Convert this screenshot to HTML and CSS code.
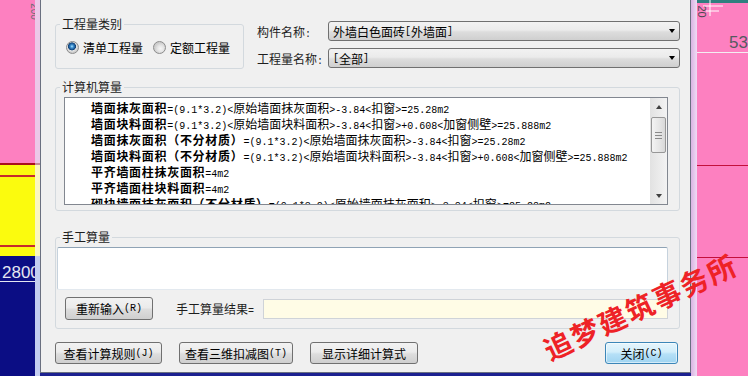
FILE: index.html
```html
<!DOCTYPE html>
<html lang="zh-CN">
<head>
    <meta charset="UTF-8">
    <title>查看工程量计算式</title>
    <link rel="stylesheet" href="styles.css">
</head>
<body>
    <div class="cad-left">
        <div class="pink-top"><span class="dim-200">200</span></div>
        <div class="red-bar"></div>
        <div class="yellow">
            <div class="thin-red"></div>
            <div class="thin-red"></div>
        </div>
        <div class="navy"><span class="dim-2800">2800</span></div>
    </div>

    <div class="window">
        <div class="dialog">
            <div class="top-row">
                <fieldset class="group type-group">
                    <legend>工程量类别</legend>
                    <div class="radios">
                        <label class="radio"><span class="dot on"></span>清单工程量</label>
                        <label class="radio"><span class="dot"></span>定额工程量</label>
                    </div>
                </fieldset>
                <div class="selects">
                    <div class="field">
                        <span class="field-label">构件名称<span class="h">:</span></span>
                        <div class="combo">外墙白色面砖<span class="h">[</span>外墙面<span class="h">]</span><span class="arrow"></span></div>
                    </div>
                    <div class="field">
                        <span class="field-label">工程量名称<span class="h">:</span></span>
                        <div class="combo"><span class="h">[</span>全部<span class="h">]</span><span class="arrow"></span></div>
                    </div>
                </div>
            </div>

            <fieldset class="group calc-group">
                <legend>计算机算量</legend>
                <div class="calc-box">
                    <div class="calc-lines">
                        <div class="ln"><b>墙面抹灰面积</b>=(9.1*3.2)&lt;<span class="c">原始墙面抹灰面积</span>&gt;-3.84&lt;<span class="c">扣窗</span>&gt;=25.28m2</div>
                        <div class="ln"><b>墙面块料面积</b>=(9.1*3.2)&lt;<span class="c">原始墙面块料面积</span>&gt;-3.84&lt;<span class="c">扣窗</span>&gt;+0.608&lt;<span class="c">加窗侧壁</span>&gt;=25.888m2</div>
                        <div class="ln"><b>墙面抹灰面积（不分材质）</b>=(9.1*3.2)&lt;<span class="c">原始墙面抹灰面积</span>&gt;-3.84&lt;<span class="c">扣窗</span>&gt;=25.28m2</div>
                        <div class="ln"><b>墙面块料面积（不分材质）</b>=(9.1*3.2)&lt;<span class="c">原始墙面块料面积</span>&gt;-3.84&lt;<span class="c">扣窗</span>&gt;+0.608&lt;<span class="c">加窗侧壁</span>&gt;=25.888m2</div>
                        <div class="ln"><b>平齐墙面柱抹灰面积</b>=4m2</div>
                        <div class="ln"><b>平齐墙面柱块料面积</b>=4m2</div>
                        <div class="ln"><b>砌块墙面抹灰面积（不分材质）</b>=(9.1*3.2)&lt;<span class="c">原始墙面抹灰面积</span>&gt;-3.84&lt;<span class="c">扣窗</span>&gt;=25.28m2</div>
                    </div>
                    <div class="vscroll">
                        <div class="sb-btn up"></div>
                        <div class="sb-track"><div class="sb-thumb"><span class="grip"></span></div></div>
                        <div class="sb-btn down"></div>
                    </div>
                </div>
            </fieldset>

            <fieldset class="group hand-group">
                <legend>手工算量</legend>
                <div class="hand-box"></div>
                <div class="hand-row">
                    <button class="btn reset-btn">重新输入<span class="h">(R)</span></button>
                    <span class="result-label">手工算量结果<span class="h">=</span></span>
                    <div class="result-input"></div>
                </div>
            </fieldset>

            <div class="actions">
                <button class="btn rule-btn">查看计算规则<span class="h">(J)</span></button>
                <button class="btn view-btn">查看三维扣减图<span class="h">(T)</span></button>
                <button class="btn detail-btn">显示详细计算式</button>
                <button class="btn close-btn">关闭<span class="h">(C)</span></button>
            </div>

            <div class="watermark">追梦建筑事务所</div>
        </div>
    </div>

    <div class="cad-right">
        <div class="teal"></div>
        <div class="r-top">
            <span class="dim-20">20</span>
            <svg class="cross" width="22" height="18" viewBox="0 0 22 18">
                <path d="M7 0V16M0 6H20M3 11H16" stroke="#ffffff" stroke-width="1" fill="none"/>
            </svg>
            <span class="dim-53">53</span>
        </div>
        <div class="white-line"></div>
        <div class="pink-red"></div>
        <div class="pink-red"></div>
    </div>
</body>
</html>
```

FILE: styles.css
```css
*{
    box-sizing: border-box;
}
body{
    margin: 0;
    width: 748px;
    height: 376px;
    overflow: hidden;
    display: flex;
    background-color: #fd80c0;
    font-family: "Noto Sans CJK SC", sans-serif;
    font-size: 12px;
    color: #000;
}
.h{
    font-family: "Liberation Mono", monospace;
    font-size: 10px;
}

/* cad drawing behind the dialog */
.cad-left{
    width: 35px;
    flex-shrink: 0;
    display: flex;
    flex-direction: column;
    overflow: hidden;
}
.pink-top{
    height: 163px;
    background-color: #fd80c0;
    position: relative;
}
.dim-200{
    position: absolute;
    right: -8px;
    top: 6px;
    font: 10px "Liberation Sans", sans-serif;
    color: #6c6c74;
    transform: rotate(90deg);
}
.red-bar{
    height: 2px;
    background-color: #a8101c;
}
.yellow{
    height: 91px;
    background-color: #fbfb0e;
    display: flex;
    flex-direction: column;
}
.thin-red{
    height: 2px;
    margin-top: 10px;
    background-color: #c62a2c;
}
.thin-red + .thin-red{
    margin-top: 68px;
}
.navy{
    flex: 1;
    background-color: #0b0d84;
    padding-top: 8px;
}
.dim-2800{
    display: inline-block;
    padding-left: 2px;
    font: 17px/16px "Liberation Sans", sans-serif;
    color: #e4e6f2;
    border-bottom: 1px solid #e4e6f2;
    white-space: nowrap;
}

.cad-right{
    flex: 1;
    display: flex;
    flex-direction: column;
    overflow: hidden;
    background-color: #fd80c0;
}
.teal{
    height: 3px;
    background-color: #2f7f7f;
}
.r-top{
    height: 49px;
    position: relative;
}
.dim-20{
    position: absolute;
    left: -2px;
    top: 3px;
    font: 11px/11px "Liberation Sans", sans-serif;
    color: #4a4a52;
    transform: rotate(90deg);
}
.cross{
    position: absolute;
    left: 6px;
    top: -3px;
}
.dim-53{
    position: absolute;
    left: 32px;
    top: 31px;
    font: 17px/17px "Liberation Sans", sans-serif;
    color: #555a60;
}
.white-line{
    height: 1px;
    background-color: #f4eef2;
}
.pink-red{
    height: 1px;
    margin-top: 112px;
    background-color: #c4103c;
}
.pink-red + .pink-red{
    margin-top: 91px;
}

/* window */
.window{
    width: 662px;
    flex-shrink: 0;
    display: flex;
    flex-direction: column;
    padding: 0 6px 3px 5px;
    background:
        linear-gradient(#ecc8e8 0 163px, #c28a9a 163px 165px, #fbf7c0 165px 256px, #c4cdf0 256px) left top / 5px 100% no-repeat,
        linear-gradient(to right, #d9b3e2, #efdcf4) right top / 6px 100% no-repeat,
        #1c2190;
}
.dialog{
    flex: 1;
    position: relative;
    background-color: #f0f0f0;
    border: 1px solid #6a7080;
    border-top: 0;
    padding: 17px 10px 0 14px;
}

.group{
    margin: 0;
    min-width: 0;
    border: 1px solid #d3d9de;
    border-radius: 3px;
}
.group legend{
    padding: 0 2px;
    line-height: 14px;
    color: #1e1e1e;
}

.top-row{
    display: flex;
    align-items: flex-start;
    gap: 13px;
}
.type-group{
    width: 189px;
    padding: 9px 0 14px 10px;
}
.type-group legend{
    margin-left: -6px;
}
.radios{
    display: flex;
    align-items: center;
    height: 14px;
}
.radio{
    display: flex;
    align-items: center;
    gap: 4px;
}
.radio + .radio{
    margin-left: 10px;
}
.dot{
    width: 13px;
    height: 13px;
    border-radius: 50%;
    border: 1px solid #8c8c8c;
    background: radial-gradient(circle at 60% 60%, #f6f6f6 0, #e6e6e6 3px, #cdcdcd 6px);
}
.dot.on{
    background: radial-gradient(circle at 45% 40%, #b0e6ff 0, #3f92d2 1.5px, #1c5896 3px, #103f72 3.7px, #e6e6e6 4.3px, #cdcdcd 6px);
}

.selects{
    flex: 1;
    margin-top: 4px;
    display: flex;
    flex-direction: column;
    gap: 7px;
}
.field{
    display: flex;
    align-items: center;
}
.field-label{
    width: 71px;
    color: #1e1e1e;
}
.combo{
    flex: 1;
    height: 20px;
    display: flex;
    align-items: center;
    padding-left: 4px;
    border: 1px solid #707070;
    border-radius: 3px;
    background: linear-gradient(#f2f2f2, #ebebeb 45%, #dddddd 55%, #cfcfcf);
}
.arrow{
    margin-left: auto;
    margin-right: 4px;
    border-top: 4px solid #000;
    border-left: 3.5px solid transparent;
    border-right: 3.5px solid transparent;
}

.calc-group{
    margin-top: 11px;
    padding: 3px 11px 5px 8px;
}
.calc-group legend{
    margin-left: -4px;
}
.calc-box{
    height: 108px;
    display: flex;
    overflow: hidden;
    border: 1px solid #828790;
    background-color: #fff;
}
.calc-lines{
    flex: 1;
    min-width: 0;
    overflow: hidden;
    padding: 2px 0 0 26px;
}
.ln{
    height: 16px;
    white-space: nowrap;
    font: 10px/16px "Liberation Mono", monospace;
}
.ln b, .ln .c{
    font-family: "Noto Sans CJK SC", sans-serif;
    font-size: 12px;
}
.ln b{
    font-weight: 700;
    letter-spacing: 0.7px;
}
.vscroll{
    width: 17px;
    flex-shrink: 0;
    display: flex;
    flex-direction: column;
    background: linear-gradient(to right, #e2e2e2, #f3f3f3);
}
.sb-btn{
    height: 17px;
    display: flex;
    align-items: center;
    justify-content: center;
}
.sb-btn::before{
    content: "";
    border-left: 3.5px solid transparent;
    border-right: 3.5px solid transparent;
}
.sb-btn.up::before{
    border-bottom: 4px solid #404040;
}
.sb-btn.down::before{
    border-top: 4px solid #404040;
}
.sb-track{
    flex: 1;
    padding: 2px 1px;
}
.sb-thumb{
    height: 36px;
    display: flex;
    align-items: center;
    justify-content: center;
    border: 1px solid #979797;
    border-radius: 2px;
    background: linear-gradient(to right, #f3f3f3, #e6e6e6 55%, #d8d8d8);
}
.grip{
    width: 7px;
    height: 7px;
    background: repeating-linear-gradient(#8a8a8a 0 1px, transparent 1px 3px);
}

.hand-group{
    margin-top: 19px;
    padding: 3px 11px 8px 1px;
}
.hand-group legend{
    margin-left: 3px;
}
.hand-box{
    height: 43px;
    border: 1px solid;
    border-color: #8fa3b5 #c6d2dd #e3e9ef #c6d2dd;
    border-radius: 2px;
    background-color: #fff;
}
.hand-row{
    display: flex;
    align-items: center;
    margin-top: 7px;
    padding-left: 8px;
}
.result-label{
    margin-left: 23px;
    color: #1e1e1e;
}
.result-input{
    flex: 1;
    height: 20px;
    margin-left: 9px;
    border: 1px solid #cfd3d8;
    background-color: #fffce6;
}

.btn{
    height: 22px;
    padding: 0;
    display: flex;
    align-items: center;
    justify-content: center;
    border: 1px solid #707070;
    border-radius: 3px;
    background: linear-gradient(#f2f2f2, #ebebeb 45%, #dddddd 55%, #cfcfcf);
    font-family: "Noto Sans CJK SC", sans-serif;
    font-size: 12px;
    color: #000;
}
.reset-btn{
    width: 88px;
    height: 23px;
}
.actions{
    display: flex;
    gap: 17px;
    margin-top: 13px;
}
.rule-btn{
    width: 107px;
}
.view-btn{
    width: 114px;
}
.detail-btn{
    width: 108px;
}
.close-btn{
    width: 73px;
    margin-left: auto;
    margin-right: 2px;
    border-color: #3c86b8;
    background: linear-gradient(#e6f5fc, #d2eefb 45%, #b6e0f7 55%, #9fd4f1);
    box-shadow: inset 0 0 0 1px rgba(255, 255, 255, 0.55);
}

.watermark{
    position: absolute;
    left: 494px;
    top: 291px;
    font-size: 28px;
    line-height: 30px;
    font-weight: 700;
    letter-spacing: 2px;
    color: #ee2226;
    white-space: nowrap;
    transform: rotate(-25deg);
}
```
